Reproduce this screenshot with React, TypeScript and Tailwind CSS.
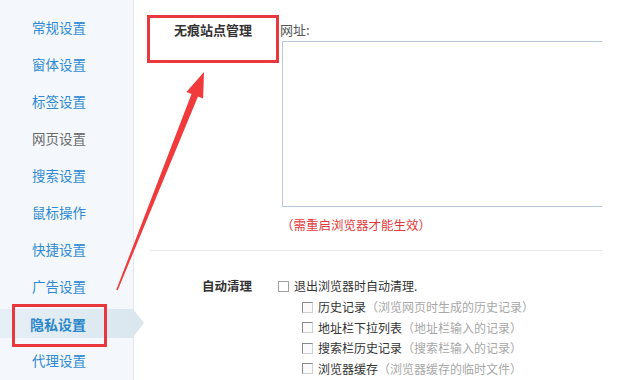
const menu = ['常规设置', '窗体设置', '标签设置', '网页设置', '搜索设置', '鼠标操作', '快捷设置', '广告设置', '隐私设置', '代理设置'];

const subItems = [
  ['历史记录', '（浏览网页时生成的历史记录）'],
  ['地址栏下拉列表', '（地址栏输入的记录）'],
  ['搜索栏历史记录', '（搜索栏输入的记录）'],
  ['浏览器缓存', '（浏览器缓存的临时文件）'],
];

function Box({ sub = false }: { sub?: boolean }) {
  return (
    <span
      className={`inline-block w-[11px] h-[11px] shrink-0 border ${
        sub ? 'border-[#8a8a8a] border-r-[#d0d0d0] border-b-[#d0d0d0] bg-[#fafafa]' : 'border-[#a0a0a0] bg-white'
      }`}
    />
  );
}

export default function App() {
  return (
    <div className="relative w-[618px] h-[380px] overflow-hidden bg-white flex font-['Noto_Sans_CJK_SC',sans-serif]">
      <aside className="w-[134px] shrink-0 h-full bg-[#f4f8fc] border-r border-[#e0e9f0] pt-[9px]">
        {menu.map((m) => {
          const active = m === '隐私设置';
          return (
            <div key={m} className="h-[37px] flex items-center">
              {active ? (
                <div className="relative w-full h-[29px] flex items-center pl-[30px] bg-gradient-to-r from-[#e6eff5] to-[#dbe7ef]">
                  <span className="text-[14px] font-bold text-[#2a86cc] leading-none">{m}</span>
                  <span className="absolute right-[-11px] top-0 w-0 h-0 border-y-[14.5px] border-y-transparent border-l-[11px] border-l-[#dbe7ef]" />
                </div>
              ) : (
                <span className={`pl-[32px] text-[13.5px] leading-none ${m === '网页设置' ? 'text-[#6a6a6a]' : 'text-[#2f8ad3]'}`}>
                  {m}
                </span>
              )}
            </div>
          );
        })}
      </aside>

      <main className="flex-1 pl-[16px] pt-[22px]">
        <div className="flex">
          <div className="w-[102px] text-right text-[13px] font-bold text-[#333] leading-[16px]">无痕站点管理</div>
          <div className="ml-[28px]">
            <div className="text-[13px] text-[#555] leading-[16px]">网址:</div>
            <div className="ml-[2px] mt-[3px] w-[321px] h-[166px] border border-[#b7cadb] border-r-transparent bg-white" />
            <div className="ml-[1px] mt-[10px] text-[12.5px] text-[#e23a3a] leading-[16px]">（需重启浏览器才能生效）</div>
          </div>
        </div>

        <div className="mt-[17px] w-[453px] h-px bg-[#e9e9e9]" />

        <div className="flex mt-[27px]">
          <div className="w-[102px] text-right text-[12.5px] font-bold text-[#333] leading-[16px]">自动清理</div>
          <div className="ml-[26px]">
            <div className="flex items-center gap-[5px] h-[16px] text-[12px] text-[#333]">
              <Box />
              <span className="whitespace-nowrap">退出浏览器时自动清理.</span>
            </div>
            <div className="pl-[24px] mt-[5px] flex flex-col gap-[4.5px]">
              {subItems.map(([a, b]) => (
                <div key={a} className="flex items-center gap-[5px] h-[16px] text-[12px] whitespace-nowrap">
                  <Box sub />
                  <span className="text-[#333]">
                    {a}
                    <span className="text-[#a8a8a8]">{b}</span>
                  </span>
                </div>
              ))}
            </div>
          </div>
        </div>
      </main>

      <div className="absolute left-[147px] top-[15px] w-[132px] h-[48px] border-[3px] border-[#e8383e]" />
      <div className="absolute left-[12px] top-[304px] w-[95px] h-[43px] border-[3px] border-[#e8383e]" />
      <svg className="absolute inset-0 pointer-events-none" width="618" height="380" viewBox="0 0 618 380">
        <polygon
          points="116.3,289.7 191.5,93.9 186.4,91.9 204,72 203.1,98.5 198,96.5 117.7,290.3"
          fill="#f03a3c"
        />
      </svg>
    </div>
  );
}
